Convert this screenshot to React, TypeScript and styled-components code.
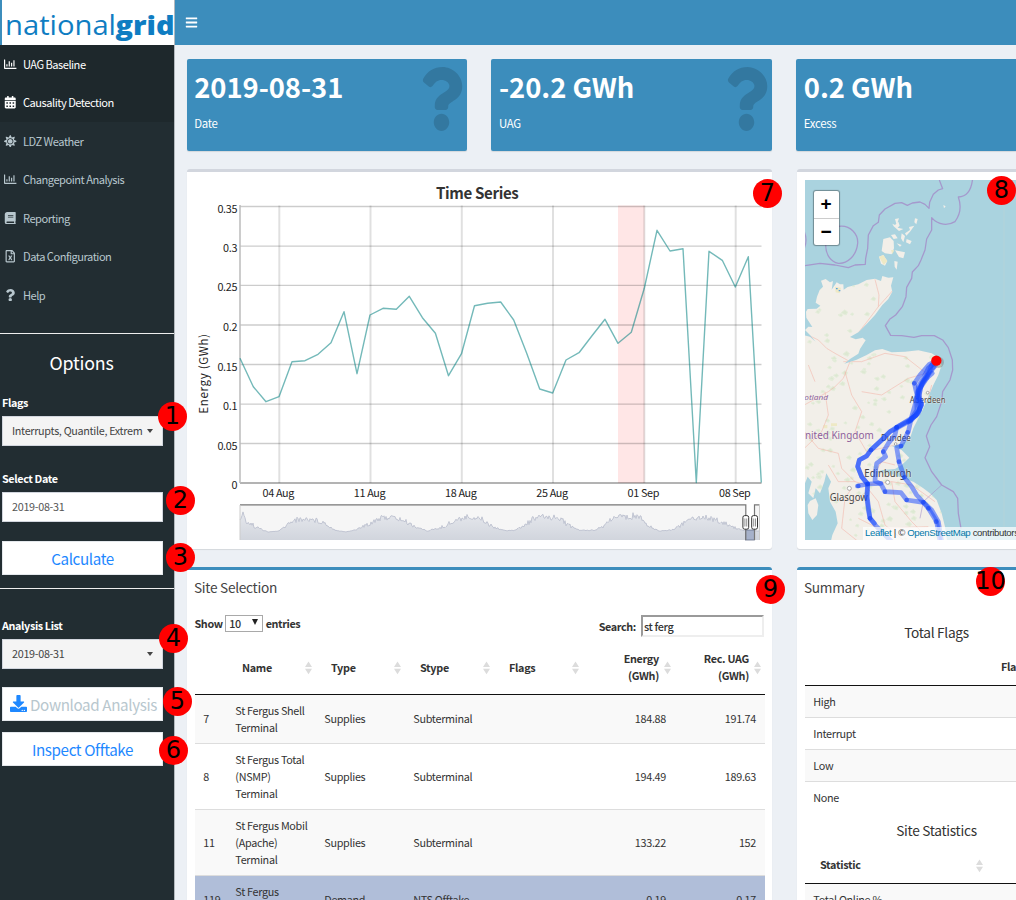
import React from 'react';
import styled, { createGlobalStyle } from 'styled-components';
import {
  FaBars, FaBook, FaCalendarAlt, FaDownload, FaQuestion,
  FaRegChartBar, FaRegFileExcel, FaSun,
} from 'react-icons/fa';

const sans = '"Noto Sans CJK SC", "Noto Sans", sans-serif';

const GlobalStyle = createGlobalStyle`
  * { box-sizing: border-box; }
  html, body { margin: 0; padding: 0; }
  body {
    font-family: ${sans};
    font-size: 10.8px;
    letter-spacing: -0.3px;
    line-height: 17px;
    color: #333;
    background: #ecf0f5;
  }
`;

const Page = styled.div`
  position: relative;
  width: 1016px;
  height: 900px;
  overflow: hidden;
  display: grid;
  grid-template-columns: 174px 842px;
`;

/* ---------- sidebar ---------- */
const Sidebar = styled.aside`
  background: #222d32;
  height: 900px;
  box-shadow: 1px 0 0 #b3b9be;
  position: relative;
`;
const Brand = styled.div`
  height: 44.5px;
  background: #fff;
  border-left: 2px solid #3c8dbc;
  svg { display: block; letter-spacing: 0; }
`;
const Menu = styled.nav`
  display: flex;
  flex-direction: column;
  margin-bottom: 18.7px;
`;
const MenuItem = styled.a<{ $active?: boolean }>`
  height: 38.5px;
  display: flex;
  align-items: center;
  gap: 6px;
  padding: 1.4px 0 0 4px;
  background: ${p => (p.$active ? '#1e282c' : 'transparent')};
  color: ${p => (p.$active ? '#fff' : '#b8c7ce')};
  font-size: 11.1px;
  letter-spacing: -0.5px;
`;
const MenuIcon = styled.span`
  width: 13px;
  display: flex;
  margin-top: -1px;
  svg { width: auto; height: 12.5px; }
`;
const Rule = styled.hr`
  border: 0;
  margin: 0;
  height: 1px;
  background: #eee;
`;
const Options = styled.section`
  padding: 15px 11px 13px 2px;
  display: flex;
  flex-direction: column;
`;
const OptionsTitle = styled.h3`
  margin: 0 2px 19px 0;
  text-align: center;
  color: #fff;
  font-size: 17.8px;
  letter-spacing: -0.2px;
  font-weight: 400;
  line-height: 26px;
`;
const Label = styled.label<{ $gap?: number }>`
  color: #fff;
  font-weight: 700;
  font-size: 10.8px;
  letter-spacing: -0.38px;
  margin: ${p => p.$gap || 0}px 0 5px;
`;
const Field = styled.div<{ $grey?: boolean }>`
  height: 30px;
  border: 1px solid #d2d6de;
  background: ${p => (p.$grey ? '#f4f4f4' : '#fff')};
  color: ${p => (p.$grey ? '#444' : '#555')};
  display: flex;
  align-items: center;
  justify-content: space-between;
  padding: 0 9px 0 9px;
  white-space: nowrap;
`;
const FieldText = styled.span`
  letter-spacing: -0.32px;
`;
const Caret = styled.span`
  border: 3.5px solid transparent;
  border-top: 4px solid #444;
  border-bottom: 0;
`;
const Button = styled.button<{ $muted?: boolean; $gap: number }>`
  height: 34px;
  margin: ${p => p.$gap}px 0 0;
  padding: 0 0 0 ${p => (p.$muted ? 2 : 0)}px;
  border: 1px solid #e4e8ec;
  background: #fff;
  color: ${p => (p.$muted ? '#b8c7ce' : '#1e88ff')};
  font-family: inherit;
  font-size: 15.2px;
  letter-spacing: -0.38px;
  line-height: 20px;
  display: flex;
  align-items: center;
  justify-content: center;
  gap: 3px;
  white-space: nowrap;
  svg { color: #1e88ff; width: 17px; height: 17px; }
`;

/* ---------- main ---------- */
const Main = styled.main`
  min-width: 0;
  display: flex;
  flex-direction: column;
`;
const TopBar = styled.header`
  flex: none;
  height: 44.5px;
  background: #3c8dbc;
  color: #fff;
  display: flex;
  align-items: center;
  padding-left: 11px;
`;
const Content = styled.div`
  padding: 14px 0 0 12.5px;
  width: 903px;
`;
const Cards = styled.div`
  display: grid;
  grid-template-columns: repeat(3, 280.8px);
  gap: 24px;
  margin-bottom: 18px;
`;
const Card = styled.div`
  height: 92px;
  background: #3c8dbc;
  color: #fff;
  border-radius: 2px;
  box-shadow: 0 1px 1px rgba(0, 0, 0, 0.1);
  padding: 9px 4px 0 7.7px;
  display: flex;
  justify-content: space-between;
`;
const CardValue = styled.h3`
  margin: -1px 0 14px;
  font-size: 27.4px;
  letter-spacing: -0.05px;
  line-height: 38px;
  font-weight: 700;
  white-space: nowrap;
`;
const CardLabel = styled.p`
  margin: -4px 0 0;
  font-size: 11.4px;
  line-height: 17px;
`;
const CardIcon = styled.span`
  color: rgba(0, 0, 0, 0.15);
  svg { display: block; margin-top: -1px; width: 43px; height: 64px; }
`;
const BoxGrid = styled.div`
  display: grid;
  grid-template-columns: 585.5px 280px;
  column-gap: 24.5px;
  row-gap: 18px;
`;
const Box = styled.section<{ $primary?: boolean; $h: number }>`
  height: ${p => p.$h}px;
  background: #fff;
  border-top: 3px solid ${p => (p.$primary ? '#3c8dbc' : '#d2d6de')};
  border-radius: 3px;
  box-shadow: 0 1px 1px rgba(0, 0, 0, 0.1);
  svg { display: block; }
`;
const MapFrame = styled.div`
  padding: 8px;
  position: relative;
`;
const Zoomer = styled.div`
  position: absolute;
  left: 17px;
  top: 19px;
  width: 25px;
  border-radius: 2px;
  background: #fff;
  box-shadow: 0 0 1px 1px rgba(0, 0, 0, 0.35);
`;
const ZoomBtn = styled.div`
  height: 27px;
  display: flex;
  align-items: center;
  justify-content: center;
  font: bold 19px/26px "Liberation Sans", sans-serif;
  color: #000;
  & + & { border-top: 1px solid #ccc; }
`;
const Attribution = styled.div`
  position: absolute;
  left: 66px;
  top: 355px;
  height: 13px;
  padding-left: 2.5px;
  width: 206px;
  background: rgba(255, 255, 255, 0.7);
  font: 9.6px/12px "Liberation Sans", sans-serif;
  letter-spacing: -0.35px;
  color: #333;
  white-space: nowrap;
  span { color: #0078a8; }
`;
const BoxTitle = styled.h3`
  margin: 0;
  padding: 9px 8px 0 7.5px;
  font-size: 13.7px;
  line-height: 17px;
  font-weight: 400;
  color: #444;
`;
const SubTitle = styled.h4<{ $top: number; $bottom: number }>`
  margin: ${p => p.$top}px 0 ${p => p.$bottom}px;
  text-align: center;
  font-size: 13.7px;
  line-height: 17px;
  font-weight: 400;
`;
const Tools = styled.div`
  display: flex;
  justify-content: space-between;
  padding: 19px 8px 0;
  height: 47px;
  font-weight: 700;
`;
const ToolGroup = styled.div<{ $gap: number }>`
  display: flex;
  gap: ${p => p.$gap}px;
  align-items: center;
  height: 17px;
  letter-spacing: -0.38px;
`;
const Select = styled.span`
  width: 38px;
  height: 17px;
  border: 1px solid #a9a9a9;
  display: flex;
  align-items: center;
  justify-content: space-between;
  padding: 0 4px 0 3px;
  font-weight: 500;
  svg { margin-top: -3px; }
`;
const Search = styled.span`
  width: 123px;
  height: 22px;
  border: 2px inset #eee;
  padding-left: 1px;
  font-weight: 500;
  line-height: 18px;
`;
const SearchGroup = styled(ToolGroup)`
  margin-top: 3px;
`;
const Table = styled.table<{ $w: number }>`
  width: ${p => p.$w}px;
  margin: 0 8px;
  table-layout: fixed;
  border-collapse: separate;
  border-spacing: 0;
`;
const Col = styled.col<{ $w: number }>`
  width: ${p => p.$w}px;
`;
const Th = styled.th<{ $right?: boolean; $h: number }>`
  height: ${p => p.$h}px;
  padding: 0 15.5px 1.6px;
  text-align: ${p => (p.$right ? 'right' : 'left')};
  vertical-align: middle;
  border-bottom: 1px solid #111;
  position: relative;
  font-weight: 700;
`;
const Td = styled.td<{ $right?: boolean }>`
  padding: 7px 8.5px 7px 8.8px;
  text-align: ${p => (p.$right ? 'right' : 'left')};
  border-top: 1px solid #ddd;
  white-space: pre;
`;
const Tr = styled.tr<{ $bg?: string; $h: number }>`
  height: ${p => p.$h}px;
  background: ${p => p.$bg || '#fff'};
  &:first-child td { border-top: 0; }
`;
const SortMark = styled.span`
  position: absolute;
  right: 3.5px;
  top: 50%;
  margin-top: -7px;
`;
const Marker = styled.div<{ $x: number; $y: number }>`
  position: absolute;
  left: ${p => p.$x - 14.5}px;
  top: ${p => p.$y - 14.5}px;
  width: 29px;
  height: 29px;
  border-radius: 50%;
  background: #f00;
  color: #000;
  display: flex;
  align-items: center;
  justify-content: center;
  font: 24px/29px "DejaVu Sans", sans-serif;
  letter-spacing: 0;
`;

const Sort = () => (
  <SortMark>
    <svg width="7" height="14" viewBox="0 0 7 14"><path d="M0 6L3.5 0.5L7 6ZM0 7.8L3.5 13.3L7 7.8Z" fill="#dcdcdc" /></svg>
  </SortMark>
);

const series: [number, number][] = [
  [240, 358.3], [253.3, 386.7], [266, 401.7], [279, 396.7], [292, 361.7], [305, 360.7], [318, 354.3],
  [331, 342.7], [344, 311.7], [357, 373.7], [370, 315], [383, 308.3], [396.3, 309.3], [409.3, 296.3],
  [422.4, 317.7], [435.4, 333.3], [448.5, 375.7], [461.5, 353.7], [474.5, 305.7], [487.6, 303.3],
  [500.7, 302], [513.7, 320], [526.7, 353.3], [539.7, 389], [552.7, 393], [566, 360], [579, 352.7],
  [592, 335.7], [605, 319.3], [618, 343.3], [631.3, 332.3], [644.3, 288.3], [657, 230.3], [670, 251],
  [683, 248.7], [696.3, 482.5], [709, 251.3], [722.3, 260.3], [735.3, 287], [748.3, 256.7], [761.3, 482.5],
];

const random = (n: number) => {
  const v = Math.sin(n * 12.9898) * 43758.5453;
  return v - Math.floor(v);
};

const overviewKnots: [number, number][] = [
  [240, 519], [243, 514], [246, 521], [256, 527], [268, 532], [279, 531], [286, 526], [293, 520], [310, 519],
  [323, 522], [335, 530], [346, 532], [355, 530], [367, 525], [377, 519], [390, 517], [402, 520], [414, 526],
  [427, 531], [440, 528], [455, 521], [465, 517], [480, 518], [492, 526], [504, 530.5], [516, 530],
  [527, 524], [534, 518], [545, 517], [560, 518], [568, 525], [580, 530.5], [594, 530], [604, 526],
  [612, 518], [625, 517], [640, 517], [648, 526], [660, 531], [672, 530], [684, 523], [692, 518],
  [705, 517], [716, 520], [728, 525], [738, 529], [750, 531], [759, 531],
];
const overview = (() => {
  const out: string[] = [];
  let k = 0;
  for (let x = 240; x <= 759; x += 1) {
    while (k < overviewKnots.length - 2 && overviewKnots[k + 1][0] < x) k += 1;
    const [x0, y0] = overviewKnots[k];
    const [x1, y1] = overviewKnots[k + 1];
    const base = y0 + ((y1 - y0) * (x - x0)) / (x1 - x0);
    const amp = Math.max(0.5, Math.min(5.5, (532 - base) / 1.5));
    out.push(`${x},${(base + (random(x) - 0.5) * amp - (x === 633 ? 7 : 0)).toFixed(1)}`);
  }
  return out.join(' ');
})();

const yTicks: [string, number][] = [
  ['0.35', 206.5], ['0.3', 246.2], ['0.25', 285.3], ['0.2', 325], ['0.15', 364.5], ['0.1', 404.2], ['0.05', 443.5], ['0', 483],
];
const xTicks: [string, number][] = [
  ['04 Aug', 279.3], ['11 Aug', 370.5], ['18 Aug', 461.8], ['25 Aug', 553], ['01 Sep', 644.3], ['08 Sep', 735.7],
];

const TimeSeries = () => (
  <svg width="585" height="377" viewBox="187 172 585 377" fontFamily='"Noto Sans CJK SC", sans-serif'>
    <text x="477.2" y="199" fontSize="15.1" fontWeight="700" textAnchor="middle" fill="#333" letterSpacing="-0.35">Time Series</text>
    <rect x="618" y="205.5" width="26.5" height="277.5" fill="#ffe6e6" />
    {yTicks.map(([t, y]) => (
      <g key={t}>
        <line x1="240" x2="761.5" y1={y} y2={y} stroke="#000" strokeOpacity={t === '0' ? 0.4 : 0.2} strokeWidth="1.3" />
        <text x="237.2" y={y + 6} fontSize="10.8" textAnchor="end" fill="#222" letterSpacing="-0.3">{t}</text>
      </g>
    ))}
    {xTicks.map(([t, x]) => (
      <g key={t}>
        <line x1={x} x2={x} y1="205.5" y2="483" stroke="#000" strokeOpacity="0.12" strokeWidth="2" />
        <text x={x - 1} y="497" fontSize="10.8" textAnchor="middle" fill="#222" letterSpacing="-0.35">{t}</text>
      </g>
    ))}
    <line x1="240" x2="240" y1="205" y2="483" stroke="#bbb" strokeWidth="1.5" />
    <text transform="translate(207.5 373.5) rotate(-90)" fontSize="11.6" textAnchor="middle" fill="#222" letterSpacing="0.6">Energy (GWh)</text>
    <polyline points={series.map(p => p.join(',')).join(' ')} fill="none" stroke="#008080" strokeOpacity="0.55" strokeWidth="1.4" strokeLinejoin="round" />
    <defs>
      <linearGradient id="range" x1="0" y1="0" x2="0" y2="1">
        <stop offset="0" stopColor="#e6e8ed" />
        <stop offset="1" stopColor="#d1d5dd" />
      </linearGradient>
    </defs>
    <rect x="240" y="505" width="519.5" height="35" fill="#f6f6f6" />
    <polygon points={`240,540 ${overview} 759,540`} fill="url(#range)" />
    <polyline points={overview} fill="none" stroke="#bcc1cf" strokeWidth="0.9" />
    <rect x="745.5" y="504" width="9" height="27" fill="#fff" />
    <rect x="745.5" y="530" width="9" height="10" fill="#a6b1ca" stroke="#66708a" strokeWidth="0.8" />
    <path d="M240 504.8H745.8V540M754.5 540V504.8H759.5" fill="none" stroke="#777" strokeWidth="1.2" />
    <path d="M759.5 505V540M240 505V540" stroke="#ccc" />
    {[745.8, 754.6].map(x => (
      <g key={x}>
        <rect x={x - 2.9} y="515.6" width="5.8" height="13.6" rx="1.8" fill="#fff" stroke="#333" />
        <path d={`M${x - 0.9} 518.5V526.5M${x + 0.9} 518.5V526.5`} stroke="#777" strokeWidth="0.8" />
      </g>
    ))}
  </svg>
);

const routes = [
  'M422 590L400 610L385 640L370 665L368 695L380 715L370 745L345 765L305 787L285 800L260 825L228 855L215 873L193 885L188 905L200 935L218 957L215 995L220 1035L225 1060L245 1085L290 1130',
  'M420 590L403 598L375 630L358 655L366 690L360 720L350 755L340 800L330 820L318 843L305 848L312 890L328 937L350 965L365 990L385 1012L400 1030L425 1070L435 1130',
  'M305 787L300 810L280 835L265 860L272 875L245 895L242 915L240 948L258 957L270 980L318 983L335 1005L385 1012L410 1035L430 1070L440 1130',
  'M187 963L218 957L258 955',
  'M422 600L405 622L380 655L372 690L380 720L365 750L305 787',
  'M410 600L395 640L368 680L374 735L350 765L305 790L285 800L260 825L228 855L215 873L193 885L188 905L200 935L218 957',
  'M416 605L398 625L384 650L376 672L372 700L378 722L362 752L340 770',
  'M218 957L217 1000L225 1060L238 1075',
  'M412 625L392 642L374 668L364 700L366 735L345 768',
];

const land = 'M0 505L45 515L62 530L45 510L30 495L40 485L52 486L34 458L33 440L38 432L65 431L76 422L62 413L66 395L74 375L84 365L78 347L92 342L105 352L114 348L110 374L125 352L135 358L145 358L146 374L158 366L190 358L215 345L240 341L258 348L262 333L280 338L295 337L288 362L292 380L280 402L262 420L240 450L215 477L190 502L165 516L182 523L203 518L212 526L195 552L190 566L165 582L148 596L185 584L215 570L240 556L262 552L290 562L330 560L370 556L410 565L432 580L440 600L430 630L415 660L400 695L385 730L370 760L355 790L345 820L318 838L290 843L320 855L343 878L320 900L300 912L262 915L240 922L285 926L325 940L355 950L385 970L405 985L425 1005L440 1045L450 1085L458 1140L105 1140L112 1110L128 1075L122 1040L105 1010L100 970L108 950L94 925L88 950L75 985L62 970L55 1000L40 985L50 950L38 935L28 960L0 960Z';

const woods = Array.from({ length: 190 }, (_, i) => {
  const x = 30 + random(i + 1) * 410;
  const y = 340 + random(i + 301) * 790;
  const a = 3 + random(i + 601) * 9;
  const b = 3 + random(i + 901) * 6;
  return `M${x} ${y}l${a} ${-b}l${b} ${a * 0.6}l${-a * 0.4} ${b}l${-b} ${-b * 0.3}Z`;
}).join('');

const CoastMap = () => (
  <svg width="264" height="360" viewBox="805 180 264 360">
    <rect x="805" y="180" width="264" height="360" fill="#aad3df" />
    <g transform="translate(795 165) scale(0.33333)">
      <clipPath id="land"><path d={land} /></clipPath>
      <path fill="#f2efe9" d={land} />
      <path fill="#f2efe9" d="M265 222L285 217L296 228L297 250L290 268L270 265L260 258ZM252 275L265 270L277 288L270 302L258 296ZM288 210L300 208L308 220L296 222ZM292 176L300 180L310 170L314 182L308 188L325 192L312 198L296 184ZM330 205L345 195L342 186L358 182L345 200L334 212ZM360 160L368 162L364 178L358 172ZM320 205L330 213L325 232L318 220ZM305 235L320 240L315 245ZM300 256L330 262L325 280L312 276ZM298 288L308 290L305 314L299 305ZM335 222L350 228L345 238L333 232ZM445 120L452 124L447 130ZM300 162L312 160L305 180ZM45 1008L62 1000L70 1020L66 1050L52 1065L40 1045L38 1020Z" />
      <path clipPath="url(#land)" d={woods} fill="#cfe3c3" stroke="#dcebd3" strokeWidth="3" opacity="0.6" />
      <path fill="#eee9c5" d="M252 275L265 270L277 288L266 300ZM288 255L298 256L292 267ZM120 365L138 368L134 385L122 382ZM85 780h12v10h-12zM108 775h18v8h-18z" />
      <path fill="#5aa0e0" d="M123 369h5v4h-5zM131 375h5v4h-5z" />
      <g clipPath="url(#land)" fill="none" stroke="#f3b7ab" strokeWidth="2.2" opacity="0.8">
        <path d="M185 510L220 465L250 425L292 378M240 343L252 390L250 425M28 505L70 525L95 550L120 565L165 590L145 640L120 665L100 680L28 720M145 590L200 590L270 565L330 575L400 630M150 620L170 690L200 740L180 800L215 860M200 680L260 690L340 640L410 620M90 680L100 750L80 800L28 850M215 860L300 840M28 800L70 850L130 865L140 910L180 950L215 960M180 950L130 950L100 900M215 960L290 950L350 960L420 1010M170 970L150 1000L140 1090L190 1130M210 960L250 1010L270 1080L330 1130M290 950L300 1010L350 1070L400 1120M215 980L180 1010L130 1000M300 900L260 890L245 915M380 760L400 700L410 660M190 1060L250 1090L400 1085M60 650L40 600" />
      </g>
      <g fill="none" stroke="#a58fca" strokeWidth="3.8" strokeLinejoin="round" opacity="0.85">
        <path d="M130 184C168 178 190 210 188 235C184 275 155 297 130 295C108 290 92 270 92 240" />
        <path d="M28 200Q38 225 28 250" />
        <path d="M28 302L75 295L120 300L160 308L180 300L211 298L212 280L218 250L220 210L235 182L250 172L253 150L270 132L300 115L320 113L337 121L352 114L375 111L390 118L402 130L404 112L415 88L430 75L443 71L433 45" />
        <path d="M533 40C530 70 520 95 490 96C500 125 495 150 480 170C460 182 430 182 410 158L410 195L395 222L390 255L378 285L370 302L352 321L350 340L335 367L333 395L322 425L302 450L284 463L271 482L287 511L320 512L357 517L380 512L418 512L443 525L460 548L472 585L473 615L465 645L443 680L440 710L425 755L408 780L394 813L404 845L390 878L410 920L440 960L475 980L488 1000L490 1045L498 1090" />
        <path d="M440 960L385 1010L375 1060" strokeWidth="2" />
      </g>
      <path d="M627 45V1130" stroke="#b9d5d8" strokeWidth="2" />
      <g fontFamily='"Noto Sans", sans-serif' fill="#444" stroke="#f6f2ec" strokeWidth="2" paintOrder="stroke" letterSpacing="0">
        <text x="344" y="714" fontSize="27" textLength="108" lengthAdjust="spacingAndGlyphs">Aberdeen</text>
        <text x="258" y="827" fontSize="27" textLength="89" lengthAdjust="spacingAndGlyphs">Dundee</text>
        <text x="208" y="937" fontSize="32" textLength="141" lengthAdjust="spacingAndGlyphs">Edinburgh</text>
        <text x="104" y="1007" fontSize="32" textLength="114" lengthAdjust="spacingAndGlyphs">Glasgow</text>
        <text x="8" y="822" fontSize="32" fill="#8d5f9b" textLength="228" lengthAdjust="spacingAndGlyphs">United Kingdom</text>
        <text x="4" y="704" fontSize="24" fontStyle="italic" fill="#8d5f9b" textLength="95" lengthAdjust="spacingAndGlyphs">Scotland</text>
      </g>
      <g fill="#fff" stroke="#888" strokeWidth="2">
        <circle cx="163" cy="970" r="6" /><circle cx="278" cy="952" r="6" /><circle cx="398" cy="683" r="4" /><circle cx="302" cy="837" r="4" />
      </g>
      <g fill="none" stroke="#1446ff" strokeWidth="14" strokeOpacity="0.5" strokeLinejoin="round" strokeLinecap="round">
        {routes.map(d => <path key={d} d={d} />)}
      </g>
      <g fill="#1040f5" fillOpacity="0.6">
        {[[228, 855], [305, 787], [265, 860], [218, 957], [190, 963], [225, 1060], [312, 890], [318, 843], [338, 802], [328, 937], [335, 1005], [385, 1012], [270, 980], [423, 1070], [400, 1030], [358, 655]].map(([x, y]) => (
          <circle key={`${x}-${y}`} cx={x} cy={y} r="7" />
        ))}
      </g>
      <circle cx="430" cy="592" r="17" fill="#555" opacity="0.3" />
      <circle cx="424" cy="587" r="15.5" fill="#f00" />
    </g>
  </svg>
);

const menu = [
  { icon: FaRegChartBar, text: 'UAG Baseline', active: true },
  { icon: FaCalendarAlt, text: 'Causality Detection', active: true },
  { icon: FaSun, text: 'LDZ Weather' },
  { icon: FaRegChartBar, text: 'Changepoint Analysis' },
  { icon: FaBook, text: 'Reporting' },
  { icon: FaRegFileExcel, text: 'Data Configuration' },
  { icon: FaQuestion, text: 'Help' },
];

const sites = [
  { id: '7', name: 'St Fergus Shell\nTerminal', type: 'Supplies', stype: 'Subterminal', e: '184.88', u: '191.74', h: 48, bg: '#f9f9f9' },
  { id: '8', name: 'St Fergus Total\n(NSMP)\nTerminal', type: 'Supplies', stype: 'Subterminal', e: '194.49', u: '189.63', h: 66, bg: '#fff' },
  { id: '11', name: 'St Fergus Mobil\n(Apache)\nTerminal', type: 'Supplies', stype: 'Subterminal', e: '133.22', u: '152', h: 66, bg: '#f9f9f9' },
  { id: '119', name: 'St Fergus\nOfftake', type: 'Demand', stype: 'NTS Offtake', e: '0.19', u: '0.17', h: 49, bg: '#b0bed9' },
];

const markers: [number, number, number][] = [
  [1, 172.5, 416.5], [2, 180.5, 500.5], [3, 180.5, 557.5], [4, 173.5, 638.5], [5, 177.5, 701.5],
  [6, 173.5, 750.5], [7, 767.5, 193.5], [8, 1001.5, 190.5], [9, 770.5, 589.5], [10, 990.5, 581.5],
];

export default function App() {
  return (
    <Page>
      <GlobalStyle />
      <Sidebar>
        <Brand>
          <svg width="172" height="44" viewBox="2 0 172 44" fill="#0f7dc2" fontFamily='"Open Sans", sans-serif'>
            <text x="5" y="34.6" fontSize="27" fontWeight="400" textLength="111" lengthAdjust="spacingAndGlyphs">national</text>
            <text x="115.5" y="34.6" fontSize="27" fontWeight="800" textLength="59" lengthAdjust="spacingAndGlyphs">grid</text>
          </svg>
        </Brand>
        <Menu>
          {menu.map(m => (
            <MenuItem key={m.text} $active={m.active}>
              <MenuIcon><m.icon /></MenuIcon>
              {m.text}
            </MenuItem>
          ))}
        </Menu>
        <Rule />
        <Options>
          <OptionsTitle>Options</OptionsTitle>
          <Label>Flags</Label>
          <Field $grey><FieldText>Interrupts, Quantile, Extrem</FieldText><Caret /></Field>
          <Label $gap={24}>Select Date</Label>
          <Field>2019-08-31</Field>
          <Button $gap={19}>Calculate</Button>
        </Options>
        <Rule />
        <Options>
          <Label $gap={13}>Analysis List</Label>
          <Field $grey>2019-08-31<Caret /></Field>
          <Button $gap={18} $muted><FaDownload />Download Analysis</Button>
          <Button $gap={11}>Inspect Offtake</Button>
        </Options>
      </Sidebar>
      <Main>
        <TopBar><FaBars size={13} /></TopBar>
        <Content>
          <Cards>
            {[['2019-08-31', 'Date'], ['-20.2 GWh', 'UAG'], ['0.2 GWh', 'Excess']].map(([v, l]) => (
              <Card key={l}>
                <div>
                  <CardValue>{v}</CardValue>
                  <CardLabel>{l}</CardLabel>
                </div>
                <CardIcon><FaQuestion preserveAspectRatio="none" /></CardIcon>
              </Card>
            ))}
          </Cards>
          <BoxGrid>
            <Box $h={380}><TimeSeries /></Box>
            <Box $h={380}>
              <MapFrame>
                <CoastMap />
                <Zoomer><ZoomBtn>+</ZoomBtn><ZoomBtn>−</ZoomBtn></Zoomer>
                <Attribution><span>Leaflet</span> | © <span>OpenStreetMap</span> contributors</Attribution>
              </MapFrame>
            </Box>
            <Box $primary $h={400}>
              <BoxTitle>Site Selection</BoxTitle>
              <Tools>
                <ToolGroup $gap={2.5}>
                  Show
                  <Select>10<svg width="6" height="6" viewBox="0 0 6 6"><path d="M0 0H6L3 6Z" fill="#222" /></svg></Select>
                  entries
                </ToolGroup>
                <SearchGroup $gap={5}>Search:<Search>st ferg</Search></SearchGroup>
              </Tools>
              <Table $w={570}>
                <colgroup>
                  {[32, 89, 89, 89, 89, 92, 90].map((w, i) => <Col key={i} $w={w} />)}
                </colgroup>
                <thead>
                  <tr>
                    <Th $h={52} />
                    {['Name', 'Type', 'Stype', 'Flags'].map(t => <Th key={t} $h={52}>{t}<Sort /></Th>)}
                    <Th $h={52} $right>Energy<br />(GWh)<Sort /></Th>
                    <Th $h={52} $right>Rec.&nbsp;UAG<br />(GWh)<Sort /></Th>
                  </tr>
                </thead>
                <tbody>
                  {sites.map(s => (
                    <Tr key={s.id} $h={s.h} $bg={s.bg}>
                      <Td>{s.id}</Td><Td>{s.name}</Td><Td>{s.type}</Td><Td>{s.stype}</Td><Td />
                      <Td $right>{s.e}</Td><Td $right>{s.u}</Td>
                    </Tr>
                  ))}
                </tbody>
              </Table>
            </Box>
            <Box $primary $h={400}>
              <BoxTitle>Summary</BoxTitle>
              <SubTitle $top={28} $bottom={9}>Total Flags</SubTitle>
              <Table $w={264}>
                <colgroup><Col $w={181} /><col /></colgroup>
                <thead><tr><Th $h={36} /><Th $h={36}>Flags</Th></tr></thead>
                <tbody>
                  {['High', 'Interrupt', 'Low', 'None'].map((t, i) => (
                    <Tr key={t} $h={i ? 32 : 31} $bg={i % 2 ? '#fff' : '#f9f9f9'}><Td>{t}</Td><Td /></Tr>
                  ))}
                </tbody>
              </Table>
              <SubTitle $top={9} $bottom={10}>Site Statistics</SubTitle>
              <Table $w={264}>
                <colgroup><Col $w={182} /><col /></colgroup>
                <thead><tr><Th $h={35}>Statistic<Sort /></Th><Th $h={35} /></tr></thead>
                <tbody><Tr $h={32} $bg="#f9f9f9"><Td>Total Online %</Td><Td /></Tr></tbody>
              </Table>
            </Box>
          </BoxGrid>
        </Content>
      </Main>
      {markers.map(([n, x, y]) => <Marker key={n} $x={x} $y={y}>{n}</Marker>)}
    </Page>
  );
}
